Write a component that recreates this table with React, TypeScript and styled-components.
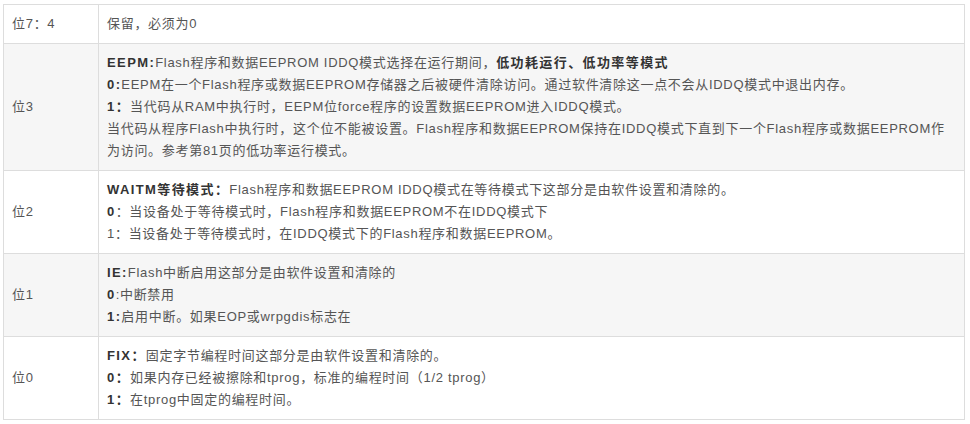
import { createGlobalStyle, styled } from "styled-components";

const GlobalStyle = createGlobalStyle`
    body {
        margin: 0;
        background-color: #ffffff;
        font-family: "Liberation Sans", "Noto Sans CJK SC", sans-serif;
    }
`;

const Wrapper = styled.div`
    padding: 4px 5px 0 3px;
`;

const Table = styled.table`
    width: 962px;
    border-collapse: collapse;
    table-layout: fixed;
    font-size: 13px;
    letter-spacing: 0.7px;
    line-height: 22px;
    color: #555555;
`;

const Row = styled.tr<{ $shaded: boolean }>`
    background-color: ${(props) => (props.$shaded ? "#f6f6f6" : "#ffffff")};
`;

const BitCell = styled.td`
    width: 78px;
    border: 1px solid #dddddd;
    padding: 8px;
    vertical-align: middle;
`;

const DescCell = styled.td`
    border: 1px solid #dddddd;
    padding: 8px;
    vertical-align: middle;
`;

const Line = styled.div`
    white-space: nowrap;
`;

const Strong = styled.b`
    font-weight: bold;
    letter-spacing: 1.4px;
    color: #333333;
`;

type Field = {
    bit: string;
    lines: React.ReactNode[];
};

const fields: Field[] = [
    { bit: "位7：4", lines: ["保留，必须为0"] },
    {
        bit: "位3",
        lines: [
            <>
                <Strong>EEPM:</Strong>Flash程序和数据EEPROM IDDQ模式选择在运行期间，
                <Strong>低功耗运行、低功率等模式</Strong>
            </>,
            <>
                <Strong>0:</Strong>EEPM在一个Flash程序或数据EEPROM存储器之后被硬件清除访问。通过软件清除这一点不会从IDDQ模式中退出内存。
            </>,
            <>
                <Strong>1：</Strong>当代码从RAM中执行时，EEPM位force程序的设置数据EEPROM进入IDDQ模式。
            </>,
            "当代码从程序Flash中执行时，这个位不能被设置。Flash程序和数据EEPROM保持在IDDQ模式下直到下一个Flash程序或数据EEPROM作",
            "为访问。参考第81页的低功率运行模式。",
        ],
    },
    {
        bit: "位2",
        lines: [
            <>
                <Strong>WAITM等待模式：</Strong>Flash程序和数据EEPROM IDDQ模式在等待模式下这部分是由软件设置和清除的。
            </>,
            <>
                <Strong>0</Strong>：当设备处于等待模式时，Flash程序和数据EEPROM不在IDDQ模式下
            </>,
            "1：当设备处于等待模式时，在IDDQ模式下的Flash程序和数据EEPROM。",
        ],
    },
    {
        bit: "位1",
        lines: [
            <>
                <Strong>IE:</Strong>Flash中断启用这部分是由软件设置和清除的
            </>,
            <>
                <Strong>0</Strong>:中断禁用
            </>,
            <>
                <Strong>1:</Strong>启用中断。如果EOP或wrpgdis标志在
            </>,
        ],
    },
    {
        bit: "位0",
        lines: [
            <>
                <Strong>FIX：</Strong>固定字节编程时间这部分是由软件设置和清除的。
            </>,
            <>
                <Strong>0：</Strong>如果内存已经被擦除和tprog，标准的编程时间（1/2 tprog）
            </>,
            <>
                <Strong>1：</Strong>在tprog中固定的编程时间。
            </>,
        ],
    },
];

function App() {
    return (
        <Wrapper>
            <GlobalStyle />
            <Table>
                <tbody>
                    {fields.map((field, i) => (
                        <Row key={field.bit} $shaded={i % 2 === 1}>
                            <BitCell>{field.bit}</BitCell>
                            <DescCell>
                                {field.lines.map((line, j) => (
                                    <Line key={j}>{line}</Line>
                                ))}
                            </DescCell>
                        </Row>
                    ))}
                </tbody>
            </Table>
        </Wrapper>
    );
}

export default App;
